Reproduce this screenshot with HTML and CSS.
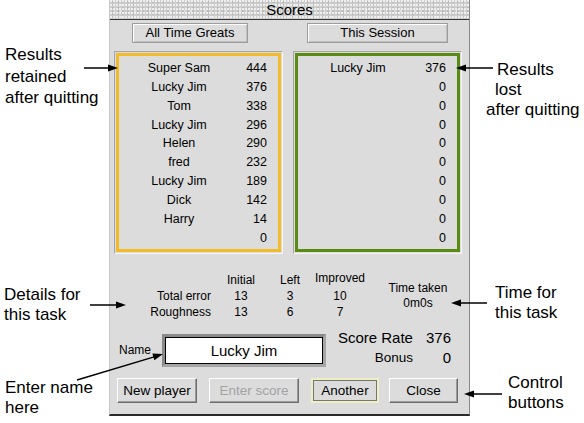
FILE: index.html
```html
<!DOCTYPE html>
<html>
<head>
<meta charset="utf-8">
<title>Scores</title>
<link rel="stylesheet" href="styles.css">
</head>
<body>
<div class="stage">
  <div class="window">
    <div class="titlebar">Scores</div>
    <div class="tabs">
      <div class="tab tab-a">All Time Greats</div>
      <div class="tab tab-b">This Session</div>
    </div>
    <div class="lists">
      <div class="listframe">
        <div class="list list-greats">
          <div class="row"><span class="name">Super Sam</span><span class="score">444</span></div>
          <div class="row"><span class="name">Lucky Jim</span><span class="score">376</span></div>
          <div class="row"><span class="name">Tom</span><span class="score">338</span></div>
          <div class="row"><span class="name">Lucky Jim</span><span class="score">296</span></div>
          <div class="row"><span class="name">Helen</span><span class="score">290</span></div>
          <div class="row"><span class="name">fred</span><span class="score">232</span></div>
          <div class="row"><span class="name">Lucky Jim</span><span class="score">189</span></div>
          <div class="row"><span class="name">Dick</span><span class="score">142</span></div>
          <div class="row"><span class="name">Harry</span><span class="score">14</span></div>
          <div class="row"><span class="name"></span><span class="score">0</span></div>
        </div>
      </div>
      <div class="listframe">
        <div class="list list-session">
          <div class="row"><span class="name">Lucky Jim</span><span class="score">376</span></div>
          <div class="row"><span class="name"></span><span class="score">0</span></div>
          <div class="row"><span class="name"></span><span class="score">0</span></div>
          <div class="row"><span class="name"></span><span class="score">0</span></div>
          <div class="row"><span class="name"></span><span class="score">0</span></div>
          <div class="row"><span class="name"></span><span class="score">0</span></div>
          <div class="row"><span class="name"></span><span class="score">0</span></div>
          <div class="row"><span class="name"></span><span class="score">0</span></div>
          <div class="row"><span class="name"></span><span class="score">0</span></div>
          <div class="row"><span class="name"></span><span class="score">0</span></div>
        </div>
      </div>
    </div>
    <div class="stats">
      <div class="lbl"></div>
      <div class="c">Initial</div>
      <div class="c">Left</div>
      <div class="c c-up">Improved</div>
      <div class="time">Time taken<br>0m0s</div>
      <div class="lbl">Total error</div>
      <div class="c">13</div>
      <div class="c">3</div>
      <div class="c">10</div>
      <div class="lbl">Roughness</div>
      <div class="c">13</div>
      <div class="c">6</div>
      <div class="c">7</div>
    </div>
    <div class="entry">
      <div class="namelabel">Name</div>
      <div class="field"><div class="fieldinner">Lucky Jim</div></div>
      <div class="scoreblock">
        <div class="sl">Score Rate</div><div class="sv">376</div>
        <div class="sl sl-small">Bonus</div><div class="sv">0</div>
      </div>
    </div>
    <div class="buttons">
      <div class="btn btn-new">New player</div>
      <div class="btn btn-enter">Enter score</div>
      <div class="btn btn-another">Another</div>
      <div class="btn btn-close">Close</div>
    </div>
  </div>

  <div class="note note-retained">Results<br>retained<br>after quitting</div>
  <div class="note note-lost"><span class="l1">Results</span><br><span class="l2">lost</span><br>after quitting</div>
  <div class="note note-details">Details for<br>this task</div>
  <div class="note note-enter">Enter name<br>here</div>
  <div class="note note-time">Time for<br>this task</div>
  <div class="note note-control">Control<br>buttons</div>

  <svg class="arrows" width="584" height="423" viewBox="0 0 584 423">
    <g stroke="#000" stroke-width="1.5" fill="none">
      <line x1="84" y1="68" x2="110" y2="68"/>
      <line x1="493" y1="68" x2="464" y2="68"/>
      <line x1="90" y1="305" x2="118" y2="305"/>
      <line x1="77" y1="380" x2="155" y2="356.6"/>
      <line x1="487" y1="303" x2="459" y2="303"/>
      <line x1="502" y1="394" x2="472" y2="394"/>
    </g>
    <g fill="#000">
      <polygon points="118,68 108,64.5 108,71.5"/>
      <polygon points="456,68 466,64.5 466,71.5"/>
      <polygon points="126,305 116,301.5 116,308.5"/>
      <polygon points="163,354 154.4,360.2 152.4,353.5"/>
      <polygon points="451,303 461,299.5 461,306.5"/>
      <polygon points="464,394 474,390.5 474,397.5"/>
    </g>
  </svg>
</div>
</body>
</html>
```

FILE: styles.css
```css
html, body {
  margin: 0;
  padding: 0;
  background: #fff;
}

.stage {
  position: relative;
  width: 584px;
  height: 423px;
  overflow: hidden;
  font-family: "Liberation Sans", Arial, sans-serif;
  color: #000;
}

.window {
  margin-left: 109px;
  width: 361px;
  height: 416px;
  box-sizing: border-box;
  background: #dcdcdc;
  border-left: 1px solid #c6c6c6;
  border-right: 1px solid #8a8a8a;
  border-bottom: 2px solid #2a2a2a;
  display: flex;
  flex-direction: column;
}

.titlebar {
  height: 19px;
  border-bottom: 1px solid #333;
  background-color: #cdcdcd;
  background-image:
    radial-gradient(circle at 1px 1px, #efefef 0.7px, transparent 1.1px),
    radial-gradient(circle at 3px 2px, #b2b2b2 0.6px, transparent 1px),
    radial-gradient(circle at 4px 5px, #e4e4e4 0.8px, transparent 1.2px);
  background-size: 3px 4px, 5px 3px, 7px 6px;
  text-align: center;
  font-size: 15px;
  line-height: 19px;
}

.tabs {
  display: flex;
  gap: 59px;
  padding-left: 22px;
  margin-top: 3px;
}

.tab {
  height: 20px;
  box-sizing: border-box;
  border: 1px solid #9c9c9c;
  box-shadow: inset 1px 1px #fff, inset -1px -1px #c0c0c0;
  font-size: 13px;
  line-height: 18px;
  text-align: center;
}

.tab-a { width: 116px; }
.tab-b { width: 141px; }

.lists {
  display: flex;
  gap: 10px;
  margin-top: 8px;
  padding-left: 4px;
}

.listframe {
  width: 169px;
  height: 203px;
  box-sizing: border-box;
  border: 1px solid;
  border-color: #a4a4a4 #f6f6f6 #f6f6f6 #a4a4a4;
  padding: 1px;
}

.list {
  height: 100%;
  box-sizing: border-box;
  border: 3px solid #f2bb2a;
  padding-top: 3px;
  font-size: 12.5px;
}

.list-session {
  border-color: #5a8c14;
}

.row {
  display: flex;
  height: 18.85px;
  line-height: 18.85px;
}

.name {
  width: 120px;
  text-align: center;
}

.score {
  flex: 1;
  text-align: right;
  padding-right: 11px;
}

.stats {
  margin-top: 18px;
  display: grid;
  grid-template-columns: 101px 60px 38px 62px 94px;
  grid-template-rows: 16px 16px 16px;
  font-size: 12px;
  line-height: 16px;
  height: 46px;
}

.lbl {
  text-align: right;
}

.c {
  display: flex;
  justify-content: center;
}

.c-up {
  margin-top: -2px;
}

.time {
  grid-column: 5;
  grid-row: 1 / span 3;
  padding-top: 9px;
  line-height: 15px;
  text-align: center;
}

.entry {
  display: flex;
  margin-top: 10px;
  height: 40px;
}

.namelabel {
  margin: 15px 0 0 9px;
  font-size: 12px;
  line-height: 14px;
}

.field {
  margin: 6px 0 0 11px;
  width: 164px;
  height: 33px;
  box-sizing: border-box;
  border: 3px solid;
  border-color: #8a8a8a #a6a6a6 #a6a6a6 #8a8a8a;
}

.fieldinner {
  height: 100%;
  box-sizing: border-box;
  border: 1px solid #000;
  background: #fff;
  text-align: center;
  font-size: 15px;
  line-height: 25px;
}

.scoreblock {
  margin-left: auto;
  margin-right: 18px;
  display: grid;
  grid-template-columns: auto auto;
  column-gap: 13px;
  justify-items: end;
  font-size: 15px;
  line-height: 20px;
}

.sl-small {
  font-size: 13.5px;
}

.buttons {
  display: flex;
  margin-top: 10px;
  padding-left: 7px;
}

.btn {
  height: 25px;
  box-sizing: border-box;
  border: 1px solid;
  border-color: #fff #6e6e6e #6e6e6e #fff;
  box-shadow: inset -1px -1px #9a9a9a;
  background: #dcdcdc;
  font-size: 13.5px;
  line-height: 24px;
  text-align: center;
}

.btn-new { width: 80px; }
.btn-enter { width: 90px; margin-left: 12px; color: #a2a2a2; }
.btn-another {
  width: 68px;
  margin-left: 12px;
  border: 2px solid #efefc2;
  box-shadow: inset 0 0 0 1px #767676;
  line-height: 21px;
}
.btn-close { width: 69px; margin-left: 10px; }

.note {
  position: absolute;
  font-size: 17px;
  line-height: 20px;
  white-space: nowrap;
}

.note-retained { left: 5px; top: 44px; line-height: 21.5px; }
.note-lost { left: 486px; top: 60px; }
.note-lost .l1 { margin-left: 11px; }
.note-lost .l2 { margin-left: 9px; }
.note-details { left: 4px; top: 285px; }
.note-enter { left: 5px; top: 378px; }
.note-time { left: 495px; top: 283px; }
.note-control { left: 508px; top: 373px; line-height: 19.5px; }

.arrows {
  position: absolute;
  left: 0;
  top: 0;
  pointer-events: none;
}
```
